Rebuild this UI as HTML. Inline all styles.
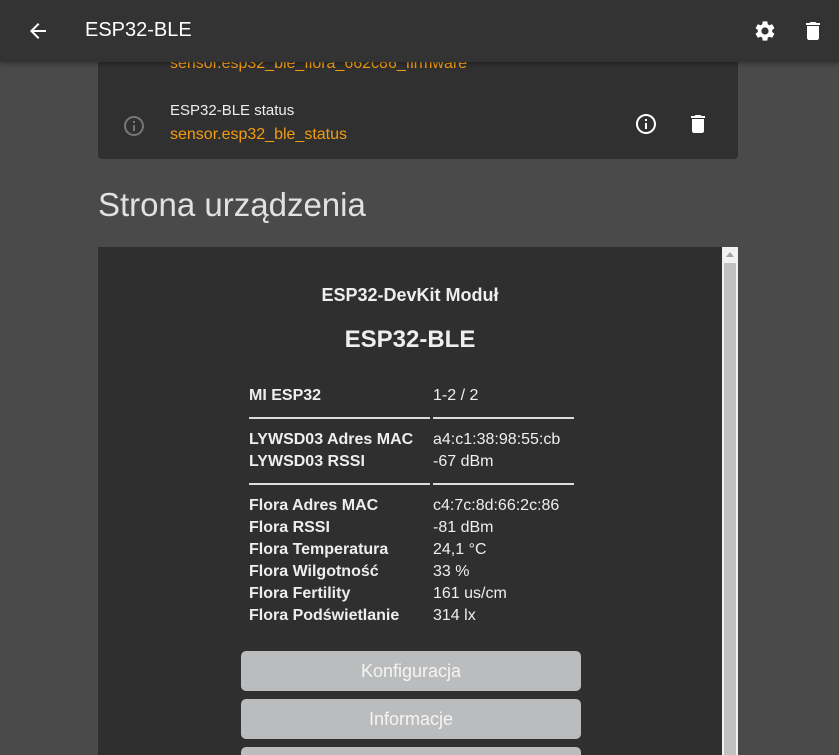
<!DOCTYPE html>
<html style="overflow:hidden"><head><meta charset="utf-8"><style>
*{margin:0;padding:0;box-sizing:border-box}
html,body{width:839px;height:755px;overflow:hidden}
body{background:#4a4a4a;font-family:"Liberation Sans",sans-serif;position:relative;color:#e1e1e1}
.hdr{position:absolute;left:0;top:0;width:839px;height:62px;background:#333;z-index:5;box-shadow:0 2px 4px rgba(0,0,0,.3)}
.hdr .t{position:absolute;left:85px;top:19px;font-size:20px;color:#fff}
.card{position:absolute;left:98px;top:20px;width:640px;height:139px;background:#303030;border-radius:4px}
.or{color:#f39c12;font-size:16px;position:absolute;left:72px}
.wt{color:#eee;font-size:16px;position:absolute;left:72px}
h1{position:absolute;left:98px;top:186px;font-weight:normal;font-size:33px;color:#e1e1e1}
.frame{position:absolute;left:98px;top:247px;width:624px;height:508px;background:#2f2f2f}
.sb{position:absolute;left:722px;top:247px;width:16px;height:508px;background:#f1f1f1;overflow:hidden}
.sb .th{position:absolute;left:2px;top:16px;width:12px;height:492px;background:#c1c1c1}
.c{position:absolute;width:624px;text-align:center;font-weight:bold;color:#eee}
.l,.v{position:absolute;font-size:16px;color:#eee}
.l{left:249px;font-weight:bold}
.v{left:433px}
.hr{position:absolute;height:2px;background:#ddd}
.btn{position:absolute;left:241px;width:340px;height:40px;background:#bbbcbd;border-radius:5px;color:#f5f5f5;font-size:18px;text-align:center;line-height:40px}
</style></head><body>
<div class="hdr">
<svg style="position:absolute;left:26px;top:19px" width="24" height="24" viewBox="0 0 24 24"><path fill="#fff" d="M20 11H7.83l5.59-5.59L12 4l-8 8 8 8 1.41-1.41L7.83 13H20v-2z"/></svg>
<div class="t">ESP32-BLE</div>
<svg style="position:absolute;left:753px;top:19px" width="24" height="24" viewBox="0 0 24 24"><path fill="#fff" d="M19.14 12.94c.04-.3.06-.61.06-.94 0-.32-.02-.64-.07-.94l2.030-1.58a.49.49 0 00.12-.61l-1.92-3.32a.49.49 0 00-.59-.22l-2.39.96c-.5-.38-1.03-.7-1.62-.94l-.36-2.54a.48.48 0 00-.48-.41h-3.84c-.24 0-.43.17-.47.41l-.36 2.54c-.59.24-1.13.57-1.620.94l-2.39-.96a.48.48 0 00-.59.22L2.74 8.87c-.12.21-.08.47.12.61l2.03 1.58c-.05.3-.09.63-.09.94s.02.64.07.94l-2.03 1.58a.49.49 0 00-.12.61l1.92 3.32c.12.22.37.29.59.22l2.39-.96c.5.38 1.03.7 1.62.94l.36 2.54c.05.24.24.41.48.41h3.84c.24 0 .44-.17.47-.41l.36-2.54c.59-.24 1.13-.56 1.62-.94l2.39.96c.22.08.47 0 .59-.22l1.92-3.32c.12-.22.07-.47-.12-.61l-2.01-1.58zM12 15.6A3.6 3.6 0 1112 8.4a3.6 3.6 0 010 7.2z"/></svg>
<svg style="position:absolute;left:801px;top:19px" width="24" height="24" viewBox="0 0 24 24"><path fill="#fff" d="M6 19c0 1.1.9 2 2 2h8c1.1 0 2-.9 2-2V7H6v12zM19 4h-3.5l-1-1h-5l-1 1H5v2h14V4z"/></svg>
</div>
<div class="card">
<div class="or" style="top:35px">sensor.esp32_ble_flora_662c86_firmware</div>
<svg style="position:absolute;left:24px;top:94px" width="24" height="24" viewBox="0 0 24 24"><path fill="#777" d="M11 7h2v2h-2zm0 4h2v6h-2zm1-9C6.48 2 2 6.48 2 12s4.480 10 10 10 10-4.48 10-10S17.52 2 12 2zm0 18c-4.41 0-8-3.59-8-8s3.59-8 8-8 8 3.59 8 8-3.59 8-8 8z"/></svg>
<div class="wt" style="top:82px;font-size:15px">ESP32-BLE status</div>
<div class="or" style="top:106px">sensor.esp32_ble_status</div>
<svg style="position:absolute;left:536px;top:92px" width="24" height="24" viewBox="0 0 24 24"><path fill="#fff" d="M11 7h2v2h-2zm0 4h2v6h-2zm1-9C6.48 2 2 6.48 2 12s4.48 10 10 10 10-4.48 10-10S17.52 2 12 2zm0 18c-4.41 0-8-3.59-8-8s3.59-8 8-8 8 3.59 8 8-3.59 8-8 8z"/></svg>
<svg style="position:absolute;left:588px;top:92px" width="24" height="24" viewBox="0 0 24 24"><path fill="#fff" d="M6 19c0 1.1.9 2 2 2h8c1.1 0 2-.9 2-2V7H6v12zM19 4h-3.5l-1-1h-5l-1 1H5v2h14V4z"/></svg>
</div>
<h1>Strona urządzenia</h1>
<div class="frame"></div>
<div class="sb"><svg style="position:absolute;left:4px;top:5px" width="8" height="5"><path d="M4 0L8 5H0z" fill="#a3a3a3"/></svg><div class="th"></div></div>
<div class="c" style="left:98px;top:285px;font-size:18px">ESP32-DevKit Moduł</div>
<div class="c" style="left:98px;top:326px;font-size:24px">ESP32-BLE</div>
<div class="l" style="top:387px">MI ESP32</div><div class="v" style="top:387px">1-2 / 2</div>
<div class="hr" style="left:249px;top:417px;width:181px"></div><div class="hr" style="left:433px;top:417px;width:141px"></div>
<div class="l" style="top:431px">LYWSD03 Adres MAC</div><div class="v" style="top:431px">a4:c1:38:98:55:cb</div>
<div class="l" style="top:453px">LYWSD03 RSSI</div><div class="v" style="top:453px">-67 dBm</div>
<div class="hr" style="left:249px;top:483px;width:181px"></div><div class="hr" style="left:433px;top:483px;width:141px"></div>
<div class="l" style="top:497px">Flora Adres MAC</div><div class="v" style="top:497px">c4:7c:8d:66:2c:86</div>
<div class="l" style="top:519px">Flora RSSI</div><div class="v" style="top:519px">-81 dBm</div>
<div class="l" style="top:541px">Flora Temperatura</div><div class="v" style="top:541px">24,1 °C</div>
<div class="l" style="top:563px">Flora Wilgotność</div><div class="v" style="top:563px">33 %</div>
<div class="l" style="top:585px">Flora Fertility</div><div class="v" style="top:585px">161 us/cm</div>
<div class="l" style="top:607px">Flora Podświetlanie</div><div class="v" style="top:607px">314 lx</div>
<div class="btn" style="top:651px">Konfiguracja</div>
<div class="btn" style="top:699px">Informacje</div>
<div class="btn" style="top:747px;height:8px;border-radius:5px 5px 0 0"></div>
</body></html>
